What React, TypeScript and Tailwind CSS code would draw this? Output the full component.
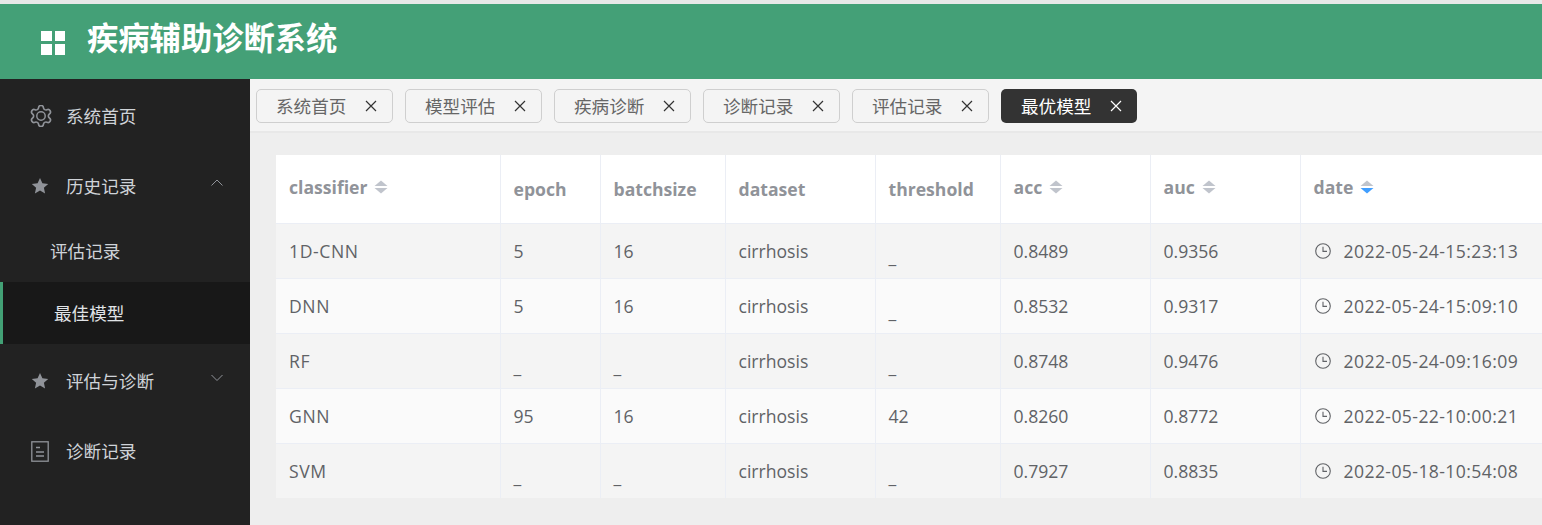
import React from "react";

const tabs = ["系统首页", "模型评估", "疾病诊断", "诊断记录", "评估记录"];
const rows = [
  ["1D-CNN", "5", "16", "cirrhosis", "_", "0.8489", "0.9356", "2022-05-24-15:23:13"],
  ["DNN", "5", "16", "cirrhosis", "_", "0.8532", "0.9317", "2022-05-24-15:09:10"],
  ["RF", "_", "_", "cirrhosis", "_", "0.8748", "0.9476", "2022-05-24-09:16:09"],
  ["GNN", "95", "16", "cirrhosis", "42", "0.8260", "0.8772", "2022-05-22-10:00:21"],
  ["SVM", "_", "_", "cirrhosis", "_", "0.7927", "0.8835", "2022-05-18-10:54:08"],
];
const headers: [string, boolean, boolean][] = [
  ["classifier", true, false],
  ["epoch", false, false],
  ["batchsize", false, false],
  ["dataset", false, false],
  ["threshold", false, false],
  ["acc", true, false],
  ["auc", true, false],
  ["date", true, true],
];
const widths = ["w-[224px]", "w-[100px]", "w-[125px]", "w-[150px]", "w-[125px]", "w-[150px]", "w-[150px]", "w-[250px]"];

function Sort({ active }: { active?: boolean }) {
  return (
    <svg width="14" height="14" viewBox="0 0 14 14" className="ml-[7px] shrink-0">
      <path d="M7 0.5 L13.5 6 H0.5 Z" fill="#c0c4cc" />
      <path d="M7 13.5 L13.5 8 H0.5 Z" fill={active ? "#409eff" : "#c0c4cc"} />
    </svg>
  );
}

function Close({ color }: { color: string }) {
  return (
    <svg width="12" height="12" viewBox="0 0 12 12" className="ml-[19px]">
      <path d="M1 1 L11 11 M11 1 L1 11" stroke={color} strokeWidth="1.2" fill="none" />
    </svg>
  );
}

function Star() {
  return (
    <svg width="18" height="18" viewBox="0 0 18 18" className="shrink-0 ml-[2px]">
      <path d="M9 1 L11.4 6.3 L17.2 6.9 L12.9 10.8 L14.1 16.5 L9 13.6 L3.9 16.5 L5.1 10.8 L0.8 6.9 L6.6 6.3 Z" fill="#909399" />
    </svg>
  );
}

function Gear() {
  return (
    <svg width="22" height="22" viewBox="0 0 24 24" className="shrink-0 ml-[1px]" fill="none" stroke="#909399" strokeWidth="1.6" strokeLinejoin="round">
      <path d="M9.671 4.136a2.34 2.34 0 0 1 4.659 0 2.34 2.34 0 0 0 3.319 1.915 2.34 2.34 0 0 1 2.33 4.033 2.34 2.34 0 0 0 0 3.831 2.34 2.34 0 0 1-2.33 4.033 2.34 2.34 0 0 0-3.319 1.915 2.34 2.34 0 0 1-4.659 0 2.34 2.34 0 0 0-3.32-1.915 2.34 2.34 0 0 1-2.33-4.033 2.34 2.34 0 0 0 0-3.831A2.34 2.34 0 0 1 6.35 6.051a2.34 2.34 0 0 0 3.319-1.915" transform="translate(-1.8 -1.8) scale(1.15)" />
      <circle cx="12" cy="12" r="4.6" />
    </svg>
  );
}

function Doc() {
  return (
    <svg width="18" height="21" viewBox="0 0 18 21" className="shrink-0 ml-[2px]" fill="none" stroke="#909399" strokeWidth="1.3">
      <rect x="0.8" y="0.8" width="16.4" height="19.4" />
      <path d="M5 6.5 H9 M5 11 H13 M5 15 H13" />
    </svg>
  );
}

function Chevron({ up }: { up?: boolean }) {
  return (
    <svg width="12" height="8" viewBox="0 0 12 8" className="ml-auto mr-[27px] -mt-[6px]" fill="none" stroke="#909399" strokeWidth="1">
      <path d={up ? "M0.5 6.5 L6 1 L11.5 6.5" : "M0.5 1 L6 6.5 L11.5 1"} />
    </svg>
  );
}

function Clock() {
  return (
    <svg width="16" height="16" viewBox="0 0 16 16" className="shrink-0 mr-[13px]" fill="none" stroke="#606266" strokeWidth="1.1">
      <circle cx="8" cy="8" r="7.3" />
      <path d="M8 3.8 V8.4 H12" />
    </svg>
  );
}

function MenuItem({ icon, label, chevron }: { icon: React.ReactNode; label: string; chevron?: "up" | "down" }) {
  return (
    <div className="flex items-center h-[70px] text-[17.6px] text-[#cfd3d8]">
      <div className="w-[66px] pl-[29px] flex items-center">{icon}</div>
      <span>{label}</span>
      {chevron && <Chevron up={chevron === "up"} />}
    </div>
  );
}

export default function App() {
  return (
    <div className="w-[1542px] h-[525px] overflow-hidden flex flex-col bg-[#eeeeee] font-['Open_Sans','Noto_Sans_CJK_SC',sans-serif]">
      <div className="h-[4px] bg-[#e8e8e8] shrink-0" />
      <header className="h-[75px] shrink-0 bg-[#44a077] flex items-center pl-[41px]">
        <div className="grid grid-cols-2 gap-[3px] w-[24px] h-[24px] mt-[2px]">
          <i className="bg-white" />
          <i className="bg-white" />
          <i className="bg-white" />
          <i className="bg-white" />
        </div>
        <h1 className="ml-[22px] -mt-[9px] text-[31.3px] leading-none font-bold text-white font-['Noto_Sans_CJK_SC',sans-serif]">疾病辅助诊断系统</h1>
      </header>
      <div className="flex flex-1 min-h-0">
        <aside className="w-[250px] shrink-0 bg-[#222222] pt-[2px]">
          <MenuItem icon={<Gear />} label="系统首页" />
          <MenuItem icon={<Star />} label="历史记录" chevron="up" />
          <div className="h-[62px] flex items-center pl-[50px] text-[17.6px] text-[#cfd3d8] -mt-[1px]">评估记录</div>
          <div className="h-[62px] flex items-center pl-[51px] text-[17.6px] text-[#e0e3e6] bg-[#181818] border-l-[3px] border-[#42a075]">最佳模型</div>
          <div className="mt-[2px]">
            <MenuItem icon={<Star />} label="评估与诊断" chevron="down" />
            <MenuItem icon={<Doc />} label="诊断记录" />
          </div>
        </aside>
        <main className="flex-1 min-w-0 overflow-hidden flex flex-col">
          <div className="h-[54px] shrink-0 bg-[#f4f4f4] border-b-2 border-[#e8e8e8] flex items-start pt-[10px] pl-[6px] gap-[12px]">
            {tabs.map((t) => (
              <div key={t} className="h-[34px] w-[137px] flex items-center pl-[19px] rounded-[5px] border border-[#cfcfcf] bg-[#f4f4f4] text-[17.6px] text-[#666666]">
                <span>{t}</span>
                <Close color="#333333" />
              </div>
            ))}
            <div className="h-[34px] w-[136px] flex items-center pl-[20px] rounded-[5px] bg-[#333333] text-[17.6px] text-white">
              <span>最优模型</span>
              <Close color="#ffffff" />
            </div>
          </div>
          <div className="pl-[26px] pt-[22px]">
            <table className="table-fixed border-collapse w-[1274px] text-[17.6px] text-[#606266]">
              <thead>
                <tr className="h-[68px] bg-white">
                  {headers.map(([h, sortable, active], i) => (
                    <th key={h} className={`${widths[i]} p-0 pl-[13px] font-bold text-left text-[#909399] border-r border-b border-[#ebeef5] last:border-r-0`}>
                      <div className={`flex items-center ${sortable ? "-mt-[3px]" : ""}`}>
                        <span>{h}</span>
                        {sortable && <Sort active={active} />}
                      </div>
                    </th>
                  ))}
                </tr>
              </thead>
              <tbody>
                {rows.map((r, ri) => (
                  <tr key={r[0]} className={`h-[55px] ${ri % 2 === 0 ? "bg-[#f4f4f4]" : "bg-[#fafafa]"}`}>
                    {r.map((c, i) => (
                      <td key={i} className={`p-0 border-r border-b border-[#ebeef5] last:border-r-0 ${i === 7 ? "pl-[14px]" : "pl-[13px]"} ${ri === 4 ? "border-b-0" : "pt-[2px]"}`}>
                        {i === 7 ? (
                          <div className="flex items-center">
                            <Clock />
                            <span className="tracking-[0.4px]">{c}</span>
                          </div>
                        ) : (
                          <span className={`${c === "_" ? "relative top-[5px]" : ""} ${i === 0 ? "tracking-[0.6px]" : ""}`}>{c}</span>
                        )}
                      </td>
                    ))}
                  </tr>
                ))}
              </tbody>
            </table>
          </div>
        </main>
      </div>
    </div>
  );
}
